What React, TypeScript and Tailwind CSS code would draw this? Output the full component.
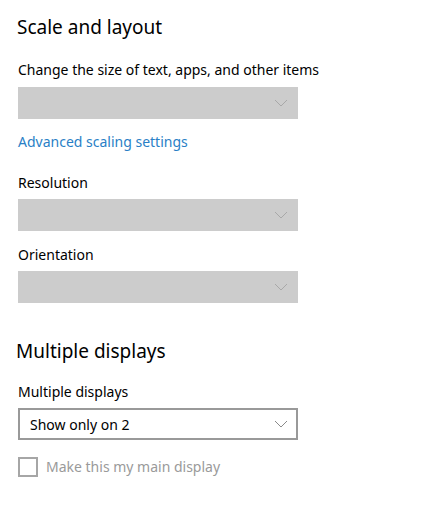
function Chevron({ color = '#8a8a8a' }: { color?: string }) {
  return (
    <svg width="14" height="8" viewBox="0 0 14 8" fill="none">
      <path d="M1 1l6 6 6-6" stroke={color} strokeWidth="1" />
    </svg>
  );
}

function GraySelect() {
  return (
    <div className="flex h-8 w-[280px] items-center justify-end bg-[#cccccc] pr-[10px]">
      <Chevron color="#a8a8a8" />
    </div>
  );
}

export default function App() {
  return (
    <div
      className="h-[511px] w-[424px] bg-white pl-[18px] text-[#000000]"
      style={{ fontFamily: '"Noto Sans", "Open Sans", sans-serif' }}
    >
      <h2 className="-ml-[1px] pt-[13px] text-[19px] leading-[28px]">Scale and layout</h2>

      <div className="mt-[19px] text-[14px] leading-[20px]">
        Change the size of text, apps, and other items
      </div>
      <div className="mt-[7px]">
        <GraySelect />
      </div>

      <div className="mt-[13px] text-[14px] leading-[20px] text-[#2a7fc6]">
        Advanced scaling settings
      </div>

      <div className="mt-[21px] text-[14px] leading-[20px]">Resolution</div>
      <div className="mt-[6px]">
        <GraySelect />
      </div>

      <div className="mt-[14px] text-[14px] leading-[20px]">Orientation</div>
      <div className="mt-[6px]">
        <GraySelect />
      </div>

      <h2 className="-ml-[2px] mt-[34px] text-[19px] leading-[28px]">Multiple displays</h2>

      <div className="mt-[17px] text-[14px] leading-[20px]">Multiple displays</div>
      <div className="mt-[6px] flex h-8 w-[280px] items-center justify-between border-2 border-[#999999] pl-[10px] pr-[8px]">
        <span className="text-[14px]">Show only on 2</span>
        <Chevron />
      </div>

      <div className="mt-[16px] flex items-center gap-[8px]">
        <div className="h-5 w-5 border-2 border-[#a6a6a6]" />
        <span className="text-[14px] text-[#9a9a9a]">Make this my main display</span>
      </div>
    </div>
  );
}
